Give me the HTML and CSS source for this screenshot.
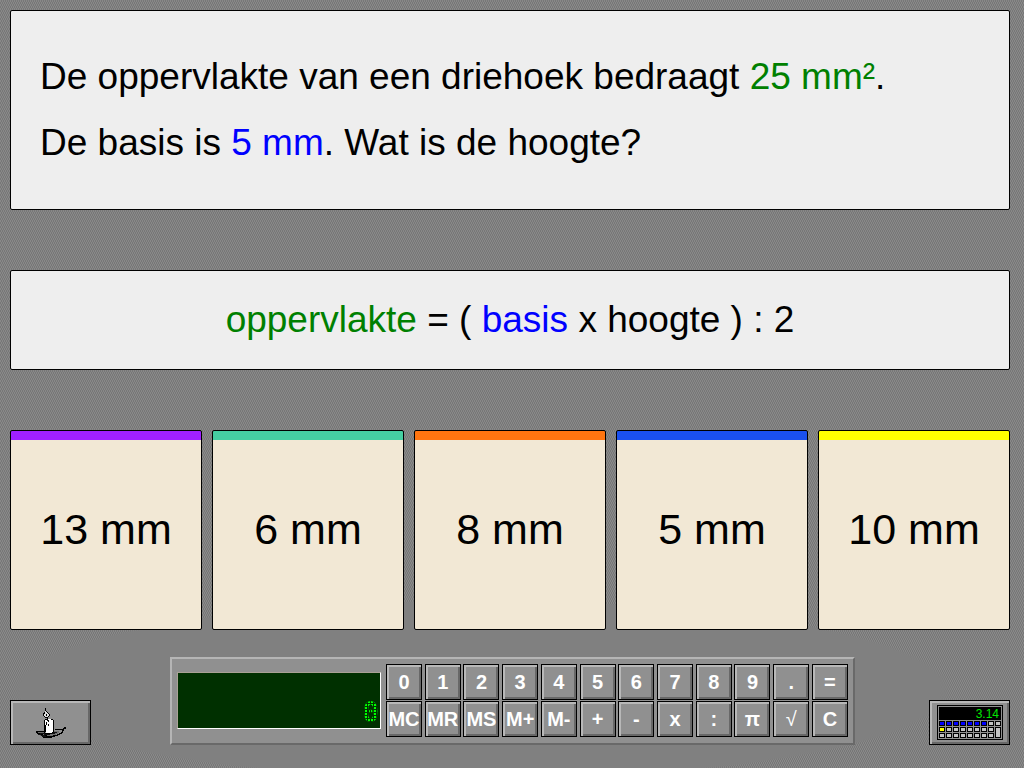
FILE: index.html
```html
<!DOCTYPE html>
<html lang="nl">
<head>
<meta charset="utf-8">
<meta name="viewport" content="width=device-width, initial-scale=1">
<title>Oppervlakte van een driehoek</title>
<link rel="stylesheet" href="styles.css">
</head>
<body>
<main class="page">
  <section class="panel question">
    <p>De oppervlakte van een driehoek bedraagt <span class="green">25 mm²</span>.</p>
    <p>De basis is <span class="blue">5 mm</span>. Wat is de hoogte?</p>
  </section>
  <section class="panel formula">
    <p><span class="green">oppervlakte</span> = ( <span class="blue">basis</span> x hoogte ) : 2</p>
  </section>
  <div class="answers">
    <button type="button" class="answer purple">13 mm</button>
    <button type="button" class="answer teal">6 mm</button>
    <button type="button" class="answer orange">8 mm</button>
    <button type="button" class="answer royal">5 mm</button>
    <button type="button" class="answer yellow">10 mm</button>
  </div>
  <footer class="tools">
    <button type="button" class="tool" aria-label="Kaars">
      <svg width="30" height="30" viewBox="6 8 30 30" shape-rendering="crispEdges" aria-hidden="true">
        <path d="M7 32h8v2h8v-3h6v2h-1v1h-2v1h-3v1h-4v1h-6v-1h-3v-1H9v-1H7z" fill="#707070"/>
        <path d="M6 31h9v1H8v1h2v1h3v1h4v1h6v-1h4v-1h2v-1h2v-1h1v-2h-7v-1h8v-1h1v-1h3v1h1v1h1v3h-1v-2h-1v-1h-3v2h-1v2h-1v1h-2v1h-2v1h-3v1h-3v1h-9v-1h3v-1h-5v-1H8v-1H7v-1H6z" fill="#000"/>
        <path d="M10 33h5v1h5v1h-6v-1h-4zM8 34h3v1h4v1h-4v-1H8zM23 32h4v1h-2v1h-3v-1h1zM12 36h4v1h-4z" fill="#111"/>
        <path d="M15 20h1v-1h6v1h1v12h-1v1h-6v-1h-1z" fill="#fff"/>
        <path d="M14 20h1v5h1v7h-1v1h7v-1h1V20h1v12h-1v1h-1v1h-7v-1h-1zM15 19h2v1h-2zM21 19h2v1h-2zM16 22h1v3h-1zM18 24h1v2h-1z" fill="#000"/>
        <path d="M15 10h1v2h2v1h1v1h1v2h-1v1h-1v1h-3v-1h-1v-1h-1v-2h1v-2h1z" fill="#ddd"/>
        <path d="M15 8h1v3h1v1h1v1h1v1h1v2h-1v1h-1v1h-3v-1h-1v-1h-1v-3h1v-1h1v2h-1v2h1v1h3v-1h1v-2h-1v-1h-1v-1h-1v-1h-1zM16 14h1v2h-1zM17 17h1v3h1v2h-1v-1h-1z" fill="#000"/>
      </svg>
    </button>
    <section class="calculator" aria-label="Rekenmachine">
      <output class="display"><span class="digits">0</span></output>
      <div class="keys">
        <button type="button">0</button><button type="button">1</button><button type="button">2</button><button type="button">3</button><button type="button">4</button><button type="button">5</button><button type="button">6</button><button type="button">7</button><button type="button">8</button><button type="button">9</button><button type="button">.</button><button type="button">=</button>
        <button type="button">MC</button><button type="button">MR</button><button type="button">MS</button><button type="button">M+</button><button type="button">M-</button><button type="button">+</button><button type="button">-</button><button type="button">x</button><button type="button">:</button><button type="button">π</button><button type="button" class="root">√</button><button type="button">C</button>
      </div>
    </section>
    <button type="button" class="tool" aria-label="Rekenmachine tonen">
      <svg width="66" height="35" viewBox="0 0 66 35" shape-rendering="crispEdges" aria-hidden="true">
        <defs>
          <g id="key"><path d="M0 0h6v5H0z" fill="#000"/><path d="M1 1h4v3H1z" fill="currentColor"/></g>
        </defs>
        <path d="M0 0h66v35H0z" fill="#000"/>
        <path d="M1 1h64v33H1z" fill="#909090"/>
        <path d="M2 2h62v13H2z" fill="#000"/>
        <text x="62" y="13" text-anchor="end" class="mini">3.14</text>
        <g color="#0000ff"><use href="#key" x="2" y="16"/><use href="#key" x="9" y="16"/><use href="#key" x="16" y="16"/><use href="#key" x="23" y="16"/><use href="#key" x="30" y="16"/><use href="#key" x="37" y="16"/><use href="#key" x="44" y="16"/></g>
        <g color="#ffff00"><use href="#key" x="2" y="22"/></g>
        <g color="#c3c3c3"><use href="#key" x="51" y="16"/><use href="#key" x="58" y="16"/><use href="#key" x="9" y="22"/><use href="#key" x="16" y="22"/><use href="#key" x="23" y="22"/><use href="#key" x="30" y="22"/><use href="#key" x="37" y="22"/><use href="#key" x="44" y="22"/><use href="#key" x="51" y="22"/><use href="#key" x="2" y="28"/><use href="#key" x="9" y="28"/><use href="#key" x="16" y="28"/><use href="#key" x="23" y="28"/><use href="#key" x="30" y="28"/><use href="#key" x="37" y="28"/><use href="#key" x="44" y="28"/><use href="#key" x="51" y="28"/></g>
        <path d="M58 22h6v11h-6z" fill="#000"/><path d="M59 23h4v9h-4z" fill="#c3c3c3"/>
      </svg>
    </button>
  </footer>
</main>
</body>
</html>
```
FILE: styles.css
```css
* { box-sizing: border-box; }

body {
  margin: 0;
  min-height: 100vh;
  font-family: "Liberation Sans", Arial, sans-serif;
  color: #000;
  background:
    radial-gradient(ellipse 46% 90px at 47% 690px, #808080 98%, transparent 100%),
    repeating-conic-gradient(#777 0 25%, #898989 0 50%) 0 0 / 2px 4px;
}

p { margin: 0; }

.page {
  display: flex;
  flex-direction: column;
  gap: 60px;
  padding: 10px 14px 23px 10px;
}

.panel {
  display: flex;
  flex-direction: column;
  justify-content: center;
  background: #eee;
  border: 1px solid #000;
  border-radius: 2px;
  font-size: 37px;
  line-height: 66px;
}

.question {
  min-height: 200px;
  padding: 0 28px 0 29px;
}

.formula {
  min-height: 100px;
  text-align: center;
}

.green { color: #008000; }
.blue { color: #0000ff; }

.answers {
  display: grid;
  grid-template-columns: repeat(5, 1fr);
  gap: 10px;
}

.answer {
  min-height: 200px;
  padding: 0 0 2px;
  border: 1px solid #000;
  border-radius: 2px;
  background: linear-gradient(var(--stripe) 9px, #f2e8d5 9px);
  color: #000;
  font-family: inherit;
  font-size: 43px;
}

.purple { --stripe: #a020ff; }
.teal { --stripe: #45cea2; }
.orange { --stripe: #ff7510; }
.royal { --stripe: #1a50f0; }
.yellow { --stripe: #ffff00; }

.tools {
  display: flex;
  justify-content: space-between;
  align-items: flex-end;
  margin-top: -33px;
}

.tool,
.keys button {
  display: flex;
  align-items: center;
  justify-content: center;
  padding: 0;
  border: 1px solid #000;
  background: #909090;
  box-shadow: inset 2px 2px #b8b8b8, inset -2px -2px #686868;
}

.tool {
  width: 81px;
  height: 45px;
}

.calculator {
  display: flex;
  align-items: center;
  gap: 5px;
  margin-left: 5px;
  padding: 5px 5px 6px;
  background: #909090;
  border: 2px solid;
  border-color: #b5b5b5 #696969 #696969 #b5b5b5;
}

.display {
  display: flex;
  justify-content: flex-end;
  align-items: flex-end;
  width: 204px;
  height: 57px;
  padding-right: 1px;
  background: #003000;
  border: 1px solid;
  border-color: #aaa296 #fff #fff #aaa296;
}

.digits {
  font: bold 28px/30px "DejaVu Sans Mono", monospace;
  color: transparent;
  background:
    linear-gradient(90deg, transparent 2px, #003000 2px) 0 0 / 3px 3px,
    linear-gradient(transparent 2px, #003000 2px) 0 0 / 3px 3px,
    #00ff00;
  -webkit-background-clip: text;
  background-clip: text;
}

.keys {
  display: grid;
  grid-template-columns: repeat(12, 36px);
  justify-content: space-between;
  row-gap: 1px;
  width: 462px;
}

.keys button {
  height: 36px;
  color: #fff;
  font: bold 20px "Liberation Sans", Arial, sans-serif;
}

.keys .root { font-weight: normal; }

.mini {
  font: 12px "Liberation Sans", Arial, sans-serif;
  fill: #00e800;
}
```
